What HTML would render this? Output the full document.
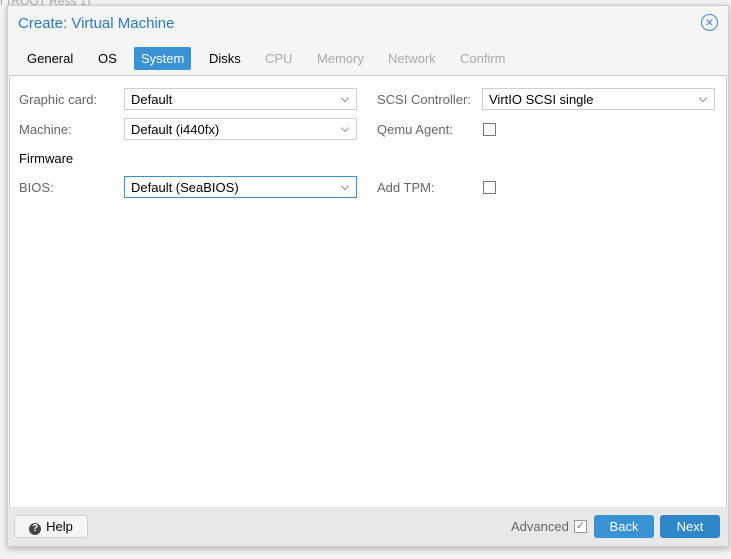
<!DOCTYPE html>
<html><head><style>
body{margin:0;width:731px;height:559px;background:#f2f2f2;font-family:"Liberation Sans",sans-serif;font-size:13px;position:relative;overflow:hidden;color:#333}
.bgtxt{position:absolute;color:#aaa;font-size:12px}
.win{position:absolute;left:7px;top:5px;width:720px;height:540px;background:#f5f5f5;border:1px solid #cfcfcf;box-shadow:0 2px 6px rgba(0,0,0,.25)}
.title{position:absolute;left:10px;top:9px;font-size:15px;color:#2c7bc0}
.close{position:absolute;left:693px;top:8px;width:15px;height:15px;border:1px solid #3d88c8;border-radius:50%;color:#3d88c8;font-size:14px;line-height:15px;text-align:center}
.tab{position:absolute;top:41px;height:23px;line-height:23px;font-size:13px;padding:0 7px;color:#000}
.tab.dis{color:#aaa}
.tab.act{background:#3892d4;color:#fff;border-radius:2px}
.panel{position:absolute;left:1px;top:69px;width:716px;height:431px;background:#fff;border:1px solid #cfcfcf}
.lbl{position:absolute;color:#666;font-size:13px}
.sel{position:absolute;height:22px;border:1px solid #cfcfcf;background:#fff;line-height:22px;padding-left:6px;box-sizing:border-box;color:#000}
.sel:after{content:"";position:absolute;right:8px;top:6px;width:5px;height:5px;border-right:1px solid #999;border-bottom:1px solid #999;transform:rotate(45deg)}
.cb{position:absolute;width:11px;height:11px;border:1px solid #777;background:#fff}
.foot{position:absolute;left:0;top:501px;width:720px;height:39px;background:#e8e8e8}
.btn{position:absolute;top:8px;height:23px;border-radius:3px;line-height:23px;text-align:center;font-size:13px}
</style></head><body>
<div class="bgtxt" style="left:0;top:-6px">r (ROOT Ress 1)</div>
<div class="win">
<div class="title">Create: Virtual Machine</div>
<div class="close">×</div>
<div class="tab" style="left:12px">General</div>
<div class="tab" style="left:83px">OS</div>
<div class="tab act" style="left:126px">System</div>
<div class="tab" style="left:194px">Disks</div>
<div class="tab dis" style="left:250px">CPU</div>
<div class="tab dis" style="left:302px">Memory</div>
<div class="tab dis" style="left:373px">Network</div>
<div class="tab dis" style="left:445px">Confirm</div>
<div class="panel">
<div class="lbl" style="left:9px;top:16px">Graphic card:</div>
<div class="sel" style="left:114px;top:12px;width:233px">Default</div>
<div class="lbl" style="left:9px;top:46px">Machine:</div>
<div class="sel" style="left:114px;top:42px;width:233px">Default (i440fx)</div>
<div class="lbl" style="left:9px;top:75px;color:#000">Firmware</div>
<div class="lbl" style="left:9px;top:104px">BIOS:</div>
<div class="sel" style="left:114px;top:100px;width:233px;border-color:#3892d4">Default (SeaBIOS)</div>
<div class="lbl" style="left:367px;top:16px">SCSI Controller:</div>
<div class="sel" style="left:472px;top:12px;width:233px">VirtIO SCSI single</div>
<div class="lbl" style="left:367px;top:46px">Qemu Agent:</div>
<div class="cb" style="left:473px;top:47px"></div>
<div class="lbl" style="left:367px;top:104px">Add TPM:</div>
<div class="cb" style="left:473px;top:105px"></div>
</div>
<div class="foot">
<div class="btn" style="left:6px;width:72px;background:#f5f5f5;border:1px solid #d0d0d0;color:#000;height:21px;line-height:21px"><span style="display:inline-block;width:12px;height:12px;border-radius:50%;background:#444;color:#fff;font-size:10px;line-height:12px;font-weight:bold;margin-right:5px">?</span>Help</div>
<div style="position:absolute;left:503px;top:12px;color:#666">Advanced</div>
<div class="cb" style="left:566px;top:13px;border-color:#999;font-size:11px;line-height:11px;color:#777;text-align:center">✓</div>
<div class="btn" style="left:586px;width:60px;background:#3892d4;color:#fff">Back</div>
<div class="btn" style="left:652px;width:60px;background:#2f86c8;color:#fff">Next</div>
</div>
</div>
</body></html>
